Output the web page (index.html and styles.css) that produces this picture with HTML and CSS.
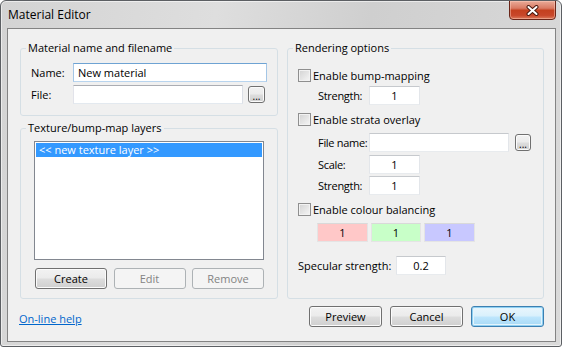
FILE: index.html
```html
<!DOCTYPE html>
<html lang="en">
<head>
  <meta charset="UTF-8">
  <title>Material Editor</title>
  <link rel="stylesheet" href="styles.css">
</head>
<body>

<div class="window">
  <div class="titlebar">
    <span class="title">Material Editor</span>
    <span class="close-btn">
      <svg width="13" height="11" viewBox="0 0 13 11">
        <path d="M2.5 2 L10.5 9 M10.5 2 L2.5 9" stroke="#4a1a10" stroke-width="4" stroke-linecap="round"/>
        <path d="M2.5 2 L10.5 9 M10.5 2 L2.5 9" stroke="#ffffff" stroke-width="2" stroke-linecap="round"/>
      </svg>
    </span>
  </div>

  <div class="client">
    <div class="columns">
      <div class="left-col">
        <fieldset class="group group-name">
          <legend>Material name and filename</legend>
          <div class="field-row">
            <label for="matname">Name:</label>
            <input type="text" id="matname" class="text focused" value="New material">
          </div>
          <div class="field-row gap-3">
            <label for="matfile">File:</label>
            <input type="text" id="matfile" class="text">
            <button type="button" class="browse">...</button>
          </div>
        </fieldset>

        <fieldset class="group group-layers">
          <legend>Texture/bump-map layers</legend>
          <div class="listbox">
            <div class="list-item selected">&lt;&lt; new texture layer &gt;&gt;</div>
          </div>
          <div class="layer-buttons">
            <button type="button" class="btn">Create</button>
            <button type="button" class="btn" disabled>Edit</button>
            <button type="button" class="btn" disabled>Remove</button>
          </div>
        </fieldset>
      </div>

      <fieldset class="group group-render">
        <legend>Rendering options</legend>

        <label class="check-row"><input type="checkbox"> Enable bump-mapping</label>
        <div class="field-row indent gap-4">
          <span class="sub-label">Strength:</span>
          <input type="text" class="text num" value="1">
        </div>

        <label class="check-row gap-7"><input type="checkbox"> Enable strata overlay</label>
        <div class="field-row indent gap-7">
          <span class="sub-label">File name:</span>
          <input type="text" class="text strata-file">
          <button type="button" class="browse">...</button>
        </div>
        <div class="field-row indent gap-3">
          <span class="sub-label">Scale:</span>
          <input type="text" class="text num" value="1">
        </div>
        <div class="field-row indent gap-2">
          <span class="sub-label">Strength:</span>
          <input type="text" class="text num" value="1">
        </div>

        <label class="check-row gap-7"><input type="checkbox"> Enable colour balancing</label>
        <div class="colour-row gap-7">
          <span class="swatch red">1</span>
          <span class="swatch green">1</span>
          <span class="swatch blue">1</span>
        </div>

        <div class="field-row gap-14">
          <span class="spec-label">Specular strength:</span>
          <input type="text" class="text num" value="0.2">
        </div>
      </fieldset>
    </div>

    <div class="footer">
      <a href="#" class="help-link">On-line help</a>
      <div class="footer-buttons">
        <button type="button" class="btn">Preview</button>
        <button type="button" class="btn">Cancel</button>
        <button type="button" class="btn default">OK</button>
      </div>
    </div>
  </div>
</div>

</body>
</html>
```

FILE: styles.css
```css
* {
  box-sizing: border-box;
}

body {
  margin: 0;
  background: #fff;
  font-family: "Open Sans", "Noto Sans", sans-serif;
  font-size: 11px;
  color: #000;
}

.window {
  width: 562px;
  height: 347px;
  border: 1px solid #5c5f63;
  border-radius: 6px 6px 3px 3px;
  background: linear-gradient(100deg, #d3d3d3 0%, #dedede 35%, #cfcfcf 60%, #dadada 100%);
  box-shadow: inset 0 0 0 1px rgba(255,255,255,0.55);
  display: flex;
  flex-direction: column;
  overflow: hidden;
}

/* title bar */

.titlebar {
  height: 27px;
  flex-shrink: 0;
  display: flex;
  justify-content: space-between;
  align-items: flex-start;
  padding: 0 5px 0 7px;
}

.title {
  font-size: 12px;
  line-height: 28px;
}

.close-btn {
  width: 47px;
  height: 20px;
  margin-top: -1px;
  border: 1px solid #6a2518;
  border-radius: 0 0 4px 4px;
  background: linear-gradient(#eaab98 0%, #d97a63 40%, #c4401f 52%, #c8472a 80%, #dc7a5c 100%);
  box-shadow: inset 0 0 0 1px rgba(255,210,195,0.45);
  display: flex;
  align-items: center;
  justify-content: center;
}

/* client area */

.client {
  flex: 1;
  margin: 0 5px 4px 6px;
  border: 1px solid #838383;
  background: #f0f0f0;
  padding: 11px 11px 14px 12px;
  display: flex;
  flex-direction: column;
}

.columns {
  flex: 1;
  display: grid;
  grid-template-columns: 258px 1fr;
  column-gap: 9px;
}

.left-col {
  display: flex;
  flex-direction: column;
  gap: 4px;
}

fieldset.group {
  margin: 0;
  min-width: 0;
  border: 1px solid #d5dfe5;
  border-radius: 3px;
  padding: 0 10px;
}

fieldset.group legend {
  padding: 0 2px;
  margin-left: -5px;
  line-height: 16px;
}

.group-name {
  padding-top: 7px !important;
  padding-bottom: 11px !important;
}

.group-layers {
  flex: 1;
  padding-top: 5px !important;
}

.group-render {
  padding-top: 12px !important;
}

/* rows */

.field-row {
  display: flex;
  align-items: center;
  height: 19px;
  white-space: nowrap;
}

.field-row label {
  width: 42px;
  flex-shrink: 0;
}

.indent {
  margin-left: 20px;
}

.sub-label {
  width: 51px;
  flex-shrink: 0;
  letter-spacing: -0.3px;
}

.spec-label {
  width: 98px;
  flex-shrink: 0;
}

.gap-2 { margin-top: 2px; }
.gap-3 { margin-top: 3px; }
.gap-4 { margin-top: 4px; }
.gap-7 { margin-top: 7px; }
.gap-14 { margin-top: 14px; }

input.text {
  height: 19px;
  border: 1px solid;
  border-color: #abadb3 #dbdfe6 #e3e9ef #e2e3ea;
  background: #fff;
  font-family: inherit;
  font-size: 11px;
  padding: 0 4px;
  margin: 0;
  outline: none;
}

.group-name input.text {
  flex: 1;
  min-width: 0;
}

input.focused {
  border-color: #6ea3d3 #a4c6e6 #b8d4ee #a4c6e6;
}

input.num {
  width: 51px;
  text-align: center;
  border-color: #c6c9cd #e3e6ea #e8ebee #e3e6ea;
}

.spec-label + input.num {
  width: 50px;
}

input.strata-file {
  width: 140px;
  border-color: #c6c9cd #e3e6ea #e8ebee #e3e6ea;
}

.browse {
  width: 17px;
  height: 17px;
  margin: 0 2px 0 5px;
  padding: 0;
  border: 1px solid #707070;
  border-radius: 3px;
  background: linear-gradient(#f2f2f2 0%, #ebebeb 48%, #dddddd 52%, #cfcfcf 100%);
  box-shadow: inset 0 0 0 1px #fbfbfb;
  font-family: inherit;
  font-size: 10px;
  line-height: 18px;
  color: #000;
}

.strata-file + .browse {
  margin-left: 6px;
}

/* list box */

.listbox {
  height: 119px;
  margin: 0 3px;
  border: 1px solid #828790;
  background: #fff;
  padding: 1px;
}

.list-item {
  height: 14px;
  line-height: 14px;
  padding-left: 3px;
}

.list-item.selected {
  background: #3399ff;
  color: #fff;
}

.layer-buttons {
  display: flex;
  justify-content: space-between;
  margin: 8px 3px 0 4px;
}

/* buttons */

.btn {
  width: 72px;
  height: 21px;
  padding: 0;
  border: 1px solid #707070;
  border-radius: 3px;
  background: linear-gradient(#f2f2f2 0%, #ebebeb 48%, #dddddd 52%, #cfcfcf 100%);
  box-shadow: inset 0 0 0 1px #fbfbfb;
  font-family: inherit;
  font-size: 11px;
  color: #000;
}

.btn:disabled {
  border-color: #adb2b5;
  background: #f4f4f4;
  box-shadow: none;
  color: #838383;
}

.btn.default {
  border-color: #3c7fb1;
  background: linear-gradient(#eaf6fd 0%, #d9f0fc 48%, #bee6fd 52%, #a7d9f5 100%);
  box-shadow: inset 0 0 0 1px #8fd0f2, inset 0 0 0 2px #e4f4fc;
}

/* checkboxes */

.check-row {
  display: flex;
  align-items: center;
  height: 14px;
  white-space: nowrap;
}

.check-row input {
  appearance: none;
  -webkit-appearance: none;
  width: 13px;
  height: 13px;
  margin: 0 2px 0 0;
  border: 1px solid #8f8f8f;
  background: linear-gradient(135deg, #d2d2d2, #f6f6f6);
  box-shadow: inset 0 0 0 1px #f2f2f2;
}

/* colour balancing */

.colour-row {
  display: flex;
  gap: 3px;
  margin-left: 19px;
  height: 19px;
}

.swatch {
  width: 51px;
  border: 1px solid #e4e4e4;
  border-top-color: #d9d9d9;
  text-align: center;
  line-height: 17px;
}

.swatch.green {
  width: 50px;
}

.swatch.red { background: #ffc8c8; }
.swatch.green { background: #c8ffc8; }
.swatch.blue { background: #c8c8ff; }

/* footer */

.footer {
  margin-top: 7px;
  height: 21px;
  display: flex;
  align-items: center;
  justify-content: space-between;
}

.help-link {
  margin-left: -1px;
  margin-top: 3px;
  color: #0066cc;
  text-decoration: underline;
}

.footer-buttons {
  display: flex;
  gap: 8px;
}

.footer-buttons .btn {
  width: 73px;
}
```
